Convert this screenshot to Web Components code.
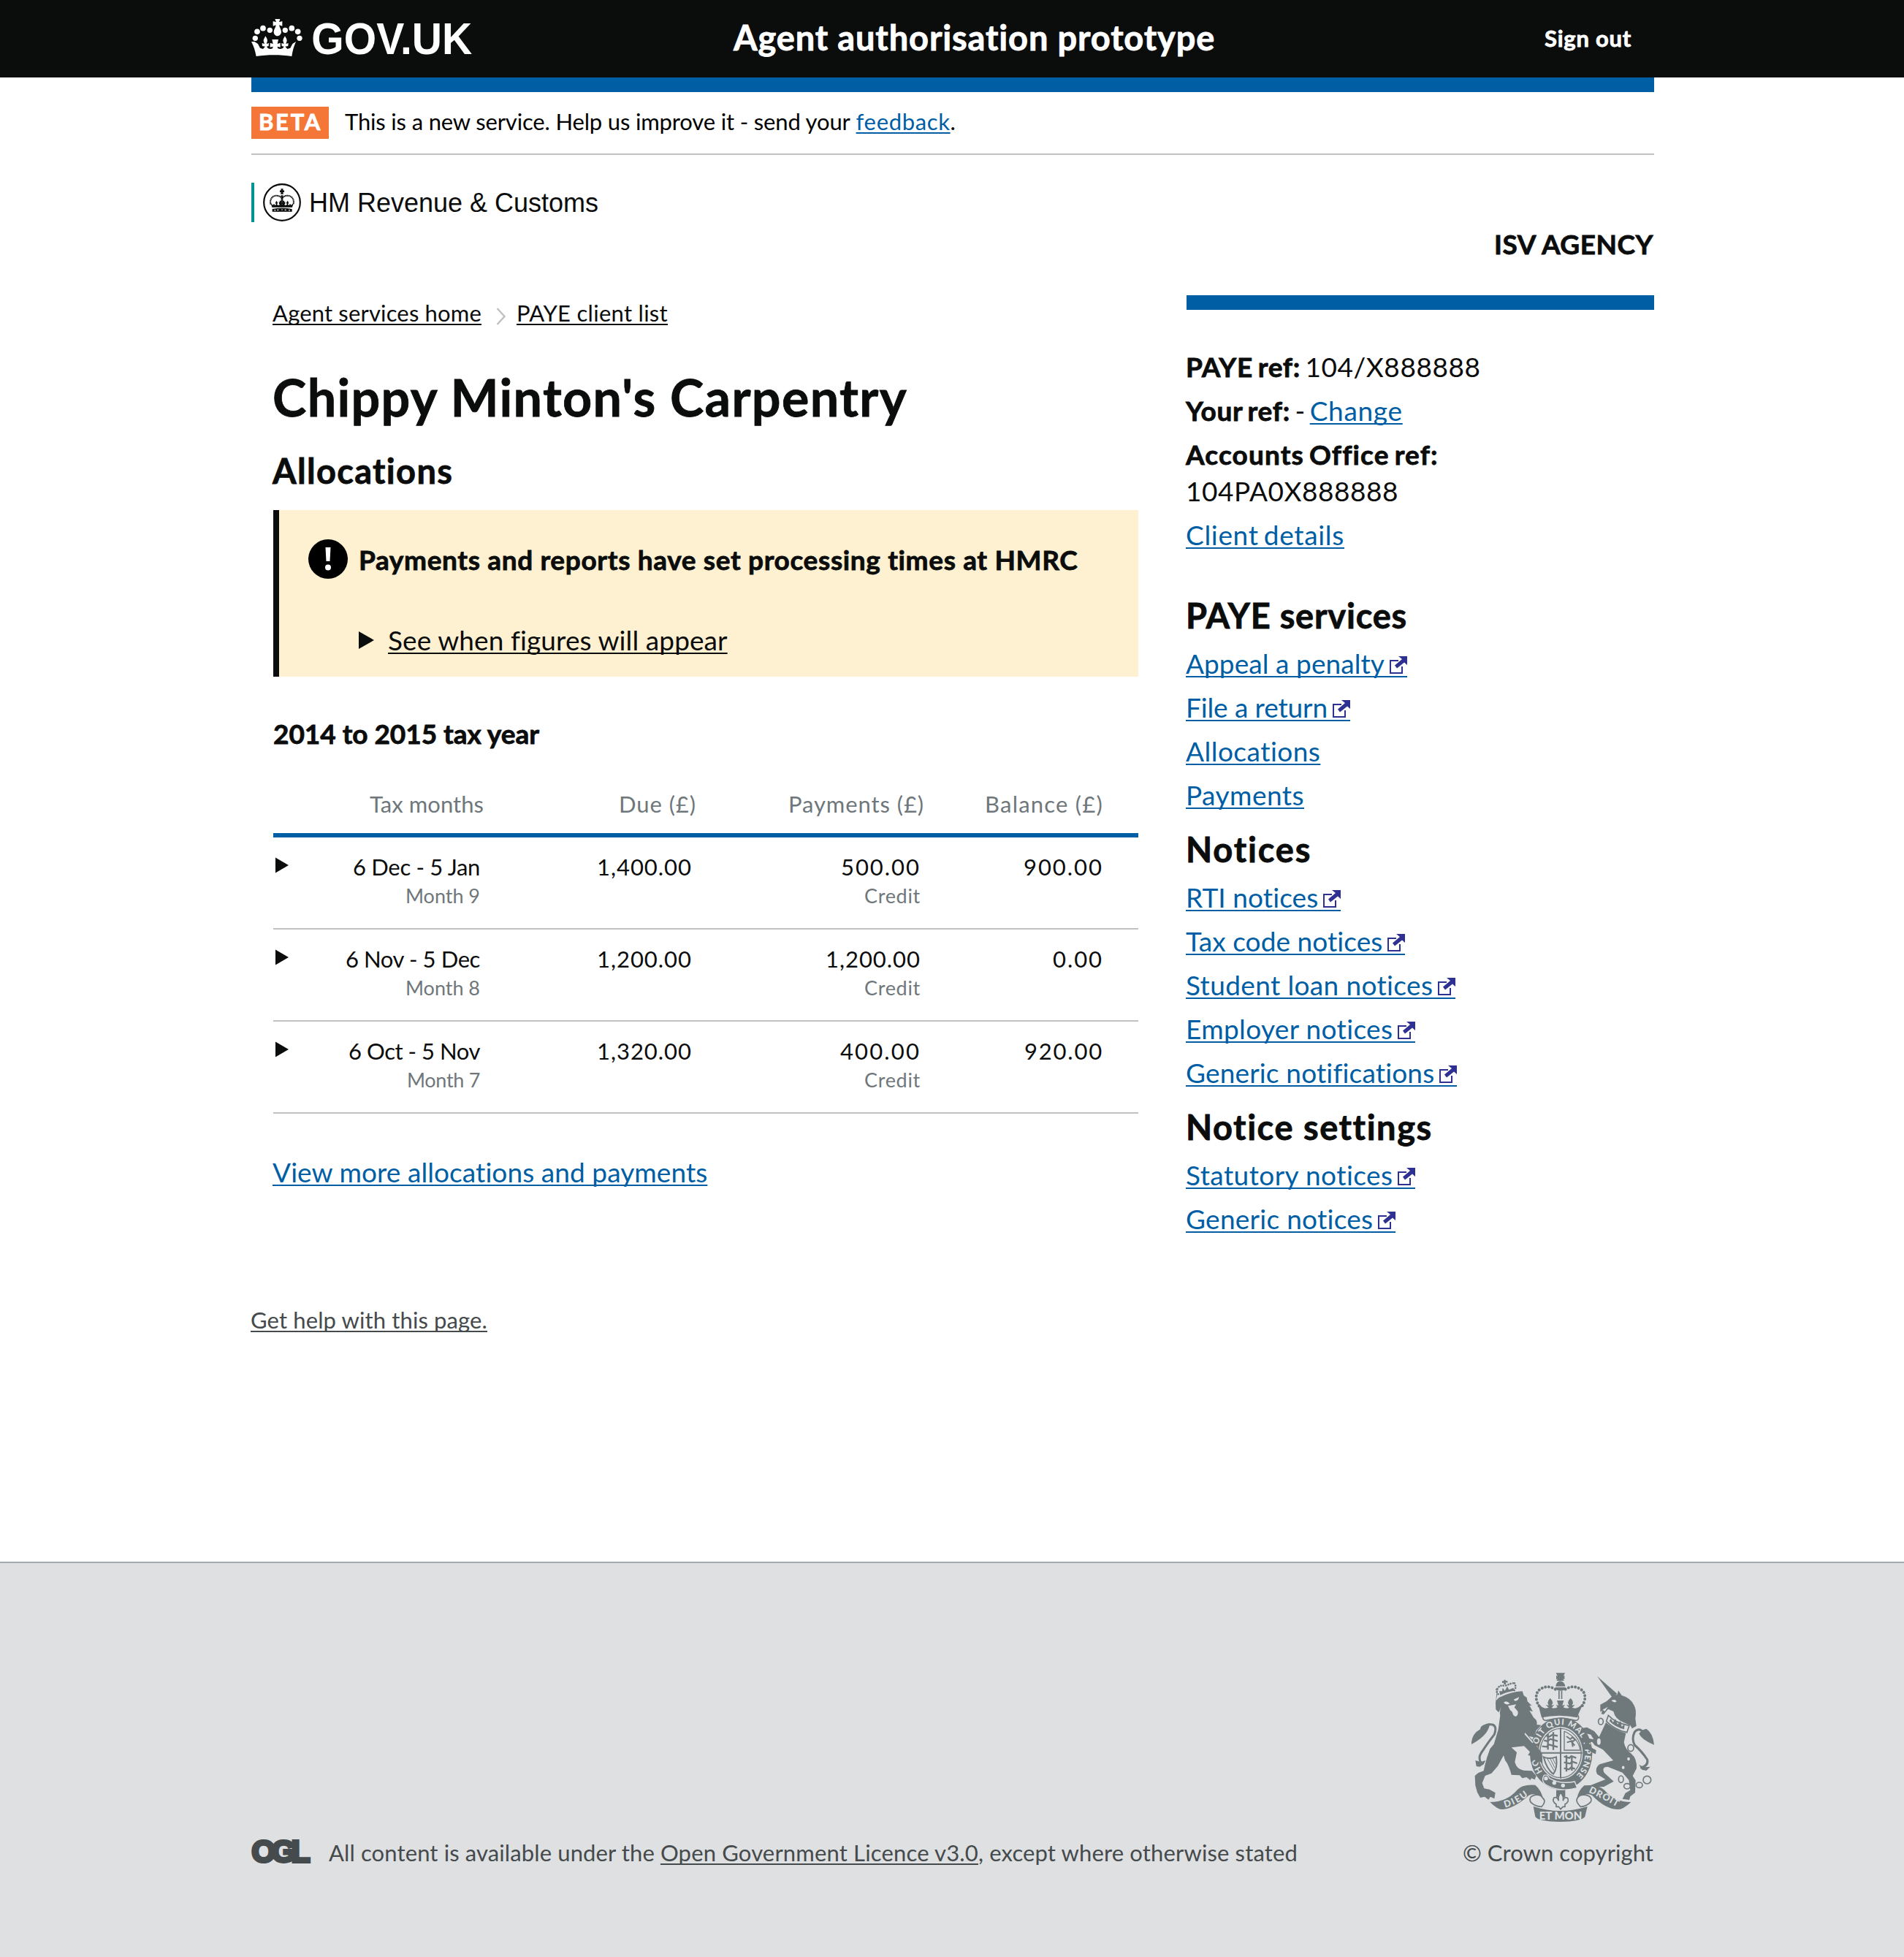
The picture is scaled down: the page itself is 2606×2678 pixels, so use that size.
<!DOCTYPE html>
<html lang="en">
<head>
<meta charset="utf-8">
<title>Chippy Minton's Carpentry - Allocations</title>
<style>
html,body{margin:0;padding:0;background:#fff}
body{font-family:Lato,"Liberation Sans",sans-serif;font-size:37px;line-height:50px;color:#0b0c0c}
</style>
</head>
<body>
<agent-page></agent-page>
<script>
const define = (name, html, after) => customElements.define(name, class extends HTMLElement {
  connectedCallback() {
    if (this.shadowRoot) return;
    const t = document.createElement('template');
    t.innerHTML = html;
    this.attachShadow({mode: 'open'}).appendChild(t.content.cloneNode(true));
    if (after) after.call(this, this.shadowRoot);
  }
});

/* Inline run of text, tracked so that it fills the width given in "w". */
define('fit-text', `<style>
:host{display:inline;white-space:nowrap}
:host([link]){color:#005ea5;text-decoration:underline;text-decoration-thickness:2px;text-underline-offset:3px;text-decoration-skip-ink:none}
:host([dark]){color:inherit}
:host([b]){font-weight:700;-webkit-text-stroke:.8px currentColor}
</style><slot></slot>`, function () {
  const w = parseFloat(this.getAttribute('w'));
  if (!w) return;
  const n = this.textContent.length;
  const range = document.createRange();
  range.selectNodeContents(this);
  const natural = range.getBoundingClientRect().width;
  if (natural) this.style.letterSpacing = ((w - natural) / n).toFixed(3) + 'px';
});

define('crown-logo', `<style>:host{display:flex;align-items:flex-start;height:106px;color:#fff}
svg{display:block}</style>
<svg width="320" height="80" viewBox="0 0 960 240" style="margin:16px 0 0 -2px" fill="#fff">
<g><circle cx="25" cy="109" r="11"/><circle cx="33" cy="82" r="11.500"/><circle cx="57" cy="68" r="11.500"/><circle cx="85" cy="76" r="11"/>
<circle cx="148" cy="76" r="11"/><circle cx="175" cy="68" r="11.500"/><circle cx="200" cy="82" r="11.500"/><circle cx="207" cy="109" r="11"/>
<path d="M106 30h21l-4 13 13-4v20l-13-4c2 10 9 18 9 28 0 9-7 16-16 17-9-1-15-8-15-17 0-10 8-18 9-28l-12 4V39l13 4z"/>
<path d="M22 123l14 9 9 17 12 4 9-10-12-2-1-12 10 3-4-12c0-9 5-12 8-20 4 8 8 11 8 20l-4 12 10-3-1 12-8 2c5 10 15 12 24 8l2-8-12 3v-18l12 4-4-18h26l-4 18 12-4v18l-12-3 2 8c10 4 20 2 25-8l-9-2-1-12 10 3-4-12c0-9 4-12 8-20 4 8 8 11 8 20l-4 12 10-3-1 12-12 2 9 10 12-4 9-17 14-9c-8 19-14 38-17 60-48-7-98-7-146 0-4-22-10-41-20-60z"/></g>
<text x="256" y="174" font-family="Liberation Sans" font-weight="700" font-size="181" textLength="660" lengthAdjust="spacingAndGlyphs">GOV.UK</text>
</svg>`);

define('gov-header', `<style>
:host{display:block;background:#0b0c0c;color:#fff;height:106px}
.in{width:1920px;margin:0 auto;display:grid;grid-template-columns:661px 1fr auto;align-items:start}
.t{font:700 47px/60px Lato;padding-top:21px}
.s{font:700 31px/40px Lato;padding:32px 30px 0 0}
</style><div class="in"><crown-logo></crown-logo>
<div class="t"><fit-text b w="660">Agent authorisation prototype</fit-text></div>
<div class="s"><fit-text b w="119">Sign out</fit-text></div></div>`);

define('blue-bar', `<style>:host{display:block;height:20px;background:#005ea5;margin:0 -1px 0 1px}</style>`);

define('phase-banner', `<style>
:host{display:flex;align-items:center;height:84px;border-bottom:2px solid #bfc1c3;margin:0 -1px 0 1px;font-size:31px;line-height:40px;gap:22px}
.tag{background:#f47738;color:#fff;width:106px;height:44px;box-sizing:border-box;padding-left:10px;line-height:40px}
.msg{padding-bottom:4px;color:#000}
</style><div class="tag"><fit-text b w="87">BETA</fit-text></div>
<div class="msg"><fit-text w="691">This is a new service. Help us improve it - send your</fit-text> <fit-text link w="129">feedback</fit-text>.</div>`);

define('hmrc-logo', `<style>
:host{display:flex;align-items:center;height:54px;margin:38px 0 0 1px;border-left:4px solid #009390;font:36px/54px "Liberation Sans"}
svg{display:block;margin:0 11px 0 12px}
fit-text{padding-top:2px}
</style><svg width="52" height="52" viewBox="60 36 156 156"><circle cx="138" cy="114" r="74.500" fill="#fff" stroke="#0b0c0c" stroke-width="6.500"/>
<g fill="#0b0c0c"><circle cx="138" cy="68" r="6"/><path d="M133 58h10l-2 8 6-2v9l-6-2 3 9h-12l3-9-6 2v-9l6 2z"/>
<path d="M134 84h8v42h-8z"/><path d="M97 134l-5-16 9 7 4-6 4 7 5-4-3-5c0-5 3-6 4-10 2 4 5 5 5 10l-3 5 6 4 6-3-3-3-1-10 5 4-2-7h20l-2 7 5-4v10l-4 3 6 3 6-4-3-5c0-5 3-6 5-10 2 4 4 5 4 10l-3 5 5 4 4-7 4 6 10-7-5 16z"/><path d="M98 141q40-7 81 0v11H98z"/></g>
<g fill="#fff"><circle cx="109" cy="146" r="2.500"/><rect x="118" y="143" width="6" height="4"/><circle cx="138" cy="144" r="2.500"/><rect x="149" y="143" width="6" height="4"/><circle cx="168" cy="146" r="2.500"/></g>
<path d="M138 84v40" stroke="#fff" stroke-width="2" stroke-dasharray="2 4"/>
<path d="M92 122c-6-17 4-35 22-36 10 0 18 4 24 10 6-6 14-10 24-10 18 1 28 19 22 36" fill="none" stroke="#0b0c0c" stroke-width="6" stroke-dasharray="5 1.500"/></svg>
<fit-text w="396">HM Revenue &amp; Customs</fit-text>`);

define('bread-crumbs', `<style>:host{display:flex;align-items:center;margin-top:4px;font-size:31px;line-height:40px;height:40px}
svg{display:block;margin:9px 14px 0 20px}</style>
<fit-text link dark w="286">Agent services home</fit-text>
<svg width="14" height="24" viewBox="0 0 14 24" fill="none" stroke="#bfc1c3" stroke-width="2.500"><path d="M1.500 1l10 11-10 11"/></svg>
<fit-text link dark w="207">PAYE client list</fit-text>`);

define('warning-box', `<style>
:host{display:block;box-sizing:border-box;margin:24px 0 0 1px;height:228px;width:1184px;border-left:8px solid #0b0c0c;background:#fef1d2;padding:40px 0 0 40px}
.r{display:flex;align-items:center;gap:15px;height:54px}
.r fit-text{padding-top:2px}
.s{display:flex;align-items:center;margin:59px 0 0 69px;height:50px;gap:19px}
svg{display:block}
</style><div class="r"><svg width="54" height="54"><circle cx="27" cy="27" r="27"/><path d="M23.500 11h7l-1 19h-5z" fill="#fff"/><circle cx="27" cy="38.500" r="4" fill="#fff"/></svg><fit-text b w="985">Payments and reports have set processing times at HMRC</fit-text></div>
<div class="s"><svg width="21" height="26"><path d="M0 1v24l21-12z" fill="#0b0c0c"/></svg><fit-text link dark w="464">See when figures will appear</fit-text></div>`);

define('alloc-row', `<style>
:host{display:grid;grid-template-columns:34px 250px 290px 313px 250px 47px;height:104px;padding-top:20px;border-bottom:2px solid #bfc1c3;margin-left:1px;font-size:31px;line-height:40px;text-align:right;width:1184px}
svg{display:block;margin:7px 0 0 3px}
</style><svg width="18" height="22"><path d="M0 .5v21l18-10.500z" fill="#0b0c0c"/></svg><slot></slot>`);
define('alloc-cell', `<style>:host{display:block;padding-right:1px}
small{display:block;font-size:27px;line-height:40px;color:#6f777b}</style><slot></slot><small><slot name="sub"></slot></small>`);

define('alloc-table', `<style>
:host{display:block;margin-top:51px}
.h{display:grid;grid-template-columns:288px 291px 312px 245px 48px;border-bottom:6px solid #005ea5;margin-left:1px;width:1184px;height:60px;font-size:31px;line-height:40px;color:#6f777b;text-align:right}
</style><div class="h"><div><fit-text w="156">Tax months</fit-text></div><div><fit-text w="106">Due (£)</fit-text></div><div><fit-text w="186">Payments (£)</fit-text></div><div><fit-text w="162">Balance (£)</fit-text></div></div>
${[['6 Dec - 5 Jan',174,'Month 9',102,'1,400.00',130,'500.00',109,'900.00',109],
['6 Nov - 5 Dec',184,'Month 8',102,'1,200.00',130,'1,200.00',130,'0.00',69],
['6 Oct - 5 Nov',180,'Month 7',100,'1,320.00',130,'400.00',110,'920.00',108]].map(r =>
`<alloc-row><alloc-cell><fit-text w="${r[1]}">${r[0]}</fit-text><fit-text slot="sub" w="${r[3]}">${r[2]}</fit-text></alloc-cell>
<alloc-cell><fit-text w="${r[5]}">${r[4]}</fit-text></alloc-cell>
<alloc-cell><fit-text w="${r[7]}">${r[6]}</fit-text><fit-text slot="sub" w="77">Credit</fit-text></alloc-cell>
<alloc-cell><fit-text w="${r[9]}">${r[8]}</fit-text></alloc-cell></alloc-row>`).join('')}`);

define('side-link', `<style>
:host{display:flex;height:50px;margin-bottom:10px;align-items:flex-start}
.x{display:none;height:44px;box-sizing:border-box;border-bottom:2px solid #005ea5;padding:15px 0 0 7px}
:host([ext]) .x{display:block}
svg{display:block}
</style><slot></slot><span class="x"><svg width="24" height="24" viewBox="0 0 24 24" fill="none" stroke="#2e3191"><path d="M12 6H1v17h16V14" stroke-width="2"/><path d="M12 0h12v12l-4-3.500-10 8-3-4L17 4z" fill="#2e3191" stroke="none"/></svg></span>`);

define('side-bar', `<style>
:host{display:block}
p{margin:0 0 10px;height:50px;word-spacing:-3px}
p.two{height:100px}
h2{margin:0 0 11px;height:60px;font:700 47px/60px Lato}
</style><blue-bar></blue-bar>
<p style="margin-top:53px"><fit-text b w="157">PAYE ref:</fit-text> <fit-text w="240">104/X888888</fit-text></p>
<p><fit-text b w="143">Your ref:</fit-text> - <fit-text link w="127">Change</fit-text></p>
<p class="two"><fit-text b w="344">Accounts Office ref:</fit-text><br><fit-text w="291">104PA0X888888</fit-text></p>
<p><fit-text link w="217">Client details</fit-text></p>
<h2 style="margin-top:55px"><fit-text b w="303">PAYE services</fit-text></h2>
<side-link ext><fit-text link w="272">Appeal a penalty</fit-text></side-link>
<side-link ext><fit-text link w="194">File a return</fit-text></side-link>
<side-link><fit-text link w="185">Allocations</fit-text></side-link>
<side-link><fit-text link w="162">Payments</fit-text></side-link>
<h2 style="margin:19px 0 11px"><fit-text b w="173">Notices</fit-text></h2>
<side-link ext><fit-text link w="182">RTI notices</fit-text></side-link>
<side-link ext><fit-text link w="270">Tax code notices</fit-text></side-link>
<side-link ext><fit-text link w="339">Student loan notices</fit-text></side-link>
<side-link ext><fit-text link w="284">Employer notices</fit-text></side-link>
<side-link ext><fit-text link w="341">Generic notifications</fit-text></side-link>
<h2 style="margin:19px 0 11px"><fit-text b w="337">Notice settings</fit-text></h2>
<side-link ext><fit-text link w="284">Statutory notices</fit-text></side-link>
<side-link ext><fit-text link w="257">Generic notices</fit-text></side-link>`);

define('main-column', `<style>
:host{display:block;padding-left:30px}
h1,h2,h3,p{margin:0}
h1{font:700 70px/80px Lato;margin-top:55px}
h2{font:700 47px/60px Lato;margin-top:31px}
h3{font:700 37px/50px Lato;margin:52px 0 0 1px;padding-top:1px}
p{margin-top:55px}
</style><bread-crumbs></bread-crumbs>
<h1><fit-text b w="869">Chippy Minton's Carpentry</fit-text></h1>
<h2><fit-text b w="248">Allocations</fit-text></h2>
<warning-box></warning-box>
<h3><fit-text b w="364">2014 to 2015 tax year</fit-text></h3>
<alloc-table></alloc-table>
<p><fit-text link w="596">View more allocations and payments</fit-text></p>`);

define('royal-arms', `<style>:host{display:block}svg{display:block}</style>
<svg width="260" height="220" viewBox="0 0 780 660" fill="#6f787b" stroke="none" font-family="Lato" font-weight="900">
<g><path d="M359 25h37l-7 14 5-4v17l-6-4 4 9h-31l5-9-6 4V35l6 4z"/><path d="M358 80q2-19 18-22 18 3 21 22z"/><path d="M357 84h41v8q-20 12-41 0z"/><path d="M369 98h5v34h-5zM380 98h5v34h-5z"/>
<path d="M356 92q-28-18-56-4-27 14-21 48 4 16 12 26" fill="none" stroke="#6f787b" stroke-width="12" stroke-linecap="round" stroke-dasharray="0.1 14"/>
<path d="M398 92q28-18 56-4 29 14 23 48-4 16-12 26" fill="none" stroke="#6f787b" stroke-width="12" stroke-linecap="round" stroke-dasharray="0.1 14"/>
<path d="M285 150l18 16 12 4 14-2-12-12 12 2-4-10q2-12 10-20 9 8 11 20l-5 10 11-2-11 12q14 4 24-2l-6-10 10 2-6-20h28l-6 20 11-2-7 10q12 6 24 2l-11-12 11 2-5-10q2-12 11-20 9 8 10 20l-4 10 12-2-12 12 14 2 12-4 20-16-18 40-7 18q-72-16-146 0l-5-18z"/>
<path d="M305 208q0-14 20-15 52-8 108 0 19 1 19 15 0 12-12 12-63-16-122 0-13 0-13-12z" fill="none" stroke="#6f787b" stroke-width="5"/>
</g>
<ellipse cx="380" cy="356" rx="128" ry="148"/>
<ellipse cx="378" cy="354" rx="91" ry="108" fill="#dee0e2"/>
<ellipse cx="378" cy="354" rx="85" ry="101" fill="none" stroke="#6f787b" stroke-width="4"/>
<path d="M378 250v208M289 353h178" stroke="#6f787b" stroke-width="6"/>
<g fill="none" stroke="#6f787b" stroke-width="7"><path d="M318 282l12 5 14-8 22 4M310 302l14 3 12-9 30 9M302 326l18 2 10-9 36 10M326 275v65M348 268v73M392 368l22 6 8-8 20 8M392 392l24 5 10-8 20 7M392 416l20 5 9-8 16 6M402 362v68M424 364v62"/><path d="M393 264v78h66q-8-50-66-78" stroke-width="4"/><path d="M402 285l16 12 8-8 12 10-14 10 12 14M404 310l20-6 4 24" stroke-width="6"/><path d="M308 370q14 52 40 70 18-24 12-70-30 10-52 0z" stroke-width="6"/><path d="M322 374l30 54M334 374l20 40M345 374l11 24" stroke-width="3"/></g>
<path id="g1" d="M304 430A99 117 0 1 1 426 458" fill="none"/>
<text font-size="34" fill="#dee0e2"><textPath href="#g1" textLength="520">HO&#160;&#160;&#160;SOIT QUI MAL Y PENSE</textPath></text>
<path d="M310 445q-14 22 6 38 60 34 130 14l-10-26q-60 12-104-14-6-18-22-12z" stroke="#dee0e2" stroke-width="4"/>
<g fill="#dee0e2"><circle cx="318" cy="458" r="8"/><circle cx="352" cy="476" r="8"/><circle cx="388" cy="487" r="8"/></g>
<path d="M118 90q10-18 32-12 22-10 38-12M122 112q-12-14-4-24M188 96q10-14 0-30" fill="none" stroke="#6f787b" stroke-width="8" stroke-linecap="round" stroke-dasharray="0.1 10"/><path d="M126 100l12 0 2-14 9 12 10-18 7 14 18-8 4 12q-34 4-58 18zM138 58l8 0-1-5 8 0-1 5 8-1v8l-8-1 2 8h-9l0-7-7 1z"/>
<path d="M113 138l12-12q48-24 96-26l6 18 12 8 3 16 18 18-10-2 14 26-14-5 18 30q16 10 12 28l18 2-20 22-10 28-20-4q26 26 36 48l18 20 2 44-14-10-10 10-10-18-14 6 4-20-16-2 8-14-24-24-52 6 22 20-8 40q8 30 36 34l34 2 18 20-6 16-14-6-4 8-16-12-18 4-10-12-34-2q-10-40-26-60l-6-20-24 44-26 30-26 10-12 30 8 22 22 4 24 14-4 24-16-8-8 12-16-12-18 4-12-22-8-28-2-40 14-12 22-8q10-50 26-90l16-20 18-60 8-58q-4-14 4-34l-10 22-12-12-1-26 4-40 8-22z"/>
<g fill="#dee0e2"><path d="M144 147q10-12 26 4-14 8-26-4zM185 134l22-10q-2 16-16 16zM162 160l34-6-8 12 14 16q4 14-8 22-12-2-14-18l-10-10z"/><path d="M232 270l34 40-4 3-32-36z"/></g>
<path d="M52 395q-14-20 0-42 26-40 54-76 12-34-8-40-22-4-30 8" fill="none" stroke="#6f787b" stroke-width="9"/><path d="M12 308q4-34 36-52 0-20 40-24-6 50-76 86zM28 384l22 6 20-6-8 16-16 10-14-2z"/>
<path d="M528 38l82 72-18 18z"/><path d="M541 155l26-14 20-18 24-10 4-16 14 20q36 10 50 40 12 20 6 56l4 30-18 10-6-12-30-14q-34-14-40-44l-22-10-18 22-10-2 4-14-8 6z"/><path d="M574 199q30 32 86 42l-10 28q-50-10-84-46z" fill="#dee0e2" stroke="#6f787b" stroke-width="5"/><path d="M578 222l6-10 9 16 10-14 9 22 12-14 5 24 12-12-2 22q-36-8-61-34z"/>
<path d="M586 138q16-8 22 4-8 8-22-4zM550 176l22-12-12 18z" fill="#dee0e2"/>
<path d="M564 228q40 34 82 44l-8 38q6 30 30 46 24 20 22 60l-16 32 12 18-2 50-20 16-4 14-28-4 12-24 20-12-6-42-26-30-60-24q-28 0-14 26l38 34-40 22-42 2-26 26-14-8 12-20 76-30-34-22q-12-24 10-40l56-16-42-44-34-18-10-14-14 2 8 20 22 12-2 16-14-6-26-18-6-28 18-12 20 4-12-20-18-4-22-6 2-16 22-4 30 16 20 24z"/>
<path d="M706 415q34-10 28-34-22-34-52-60-14-26 0-54 18-20 36 2" fill="none" stroke="#6f787b" stroke-width="9"/><path d="M762 320q-4-48-32-66-20 4-30 20 10 26 62 46zM700 402l22 10 24-2-16 16-18-4z"/>
<g stroke="#6f787b" stroke-width="5" fill="#dee0e2"><ellipse cx="543" cy="224" rx="10" ry="13"/><ellipse cx="535" cy="307" rx="10" ry="16"/><ellipse cx="666" cy="333" rx="12" ry="14"/><ellipse cx="657" cy="378" rx="8" ry="9"/><ellipse cx="635" cy="413" rx="8" ry="9"/><ellipse cx="626" cy="461" rx="10" ry="14"/><ellipse cx="651" cy="490" rx="13" ry="11"/><ellipse cx="701" cy="485" rx="13" ry="11"/><circle cx="733" cy="464" r="16"/></g>
<path d="M88 555q70 0 112-50 20-24 74-20 24 20 32 56l-28-14q-10-8-30 0-60 54-110 58-20 0-50-30zM667 555q-68 0-108-48-26-26-84-20-24 20-30 54l28-14q14-8 34 0 56 58 108 58 20 0 52-30zM266 573q110 36 222 0l-10 42q-14 20-102 21-90-1-102-21z"/>
<path d="M306 540q-10-18-34-14-26 6-18 28 18 20 46 20 20-22 6-34zM446 540q10-18 36-14 28 6 20 28-18 20-42 20-22-22-14-34z" fill="#dee0e2" stroke="#6f787b" stroke-width="5"/>
<path id="r1" d="M150 578q54-14 108-60" fill="none"/><path id="r2" d="M492 514q60 28 124 64" fill="none"/>
<g fill="#dee0e2" font-size="38"><text><textPath href="#r1" textLength="108">DIEU</textPath></text><text><textPath href="#r2" textLength="132">DROIT</textPath></text><text x="290" y="626" font-size="44" textLength="176" lengthAdjust="spacingAndGlyphs">ET MON</text></g>
<path d="M360 506h37v30h-37z"/><path d="M378 516q14 16 10 34 4-18 18-12 10 14-10 26v10h-8l-10 10-8-10h-10v-10q-18-12-10-26 14-8 20 12-4-18 8-34z" fill="#dee0e2" stroke="#6f787b" stroke-width="5"/>
</svg>`);

define('page-footer', `<style>
:host{display:block;height:540px;border-top:2px solid #a1acb2;background:#dee0e2;margin-top:311px;color:#454a4c;font-size:31px;line-height:40px}
.in{width:1920px;height:376px;margin:0 auto;padding-top:40px;display:flex;justify-content:space-between;align-items:flex-end;box-sizing:content-box}
.l{display:flex;align-items:center}
.r{display:flex;flex-direction:column;align-items:flex-end}
.l svg{display:block;margin:-13px 10px -9px -9px;overflow:visible}
royal-arms{margin:0 -7px 14px 0}
</style><div class="in"><div class="l"><svg width="106" height="62" viewBox="-10 -14 106 62"><text x=".5" y="32" font-family="Liberation Sans" font-weight="700" font-size="42" fill="#454a4c" stroke="#454a4c" stroke-width="4" textLength="80" lengthAdjust="spacing">OGL</text></svg>
<span><fit-text w="446">All content is available under the</fit-text> <fit-text link dark w="435">Open Government Licence v3.0</fit-text><fit-text w="437">, except where otherwise stated</fit-text></span></div>
<div class="r"><royal-arms></royal-arms><fit-text w="261">© Crown copyright</fit-text></div></div>`);

define('agent-page', `<style>
:host{display:block;min-height:2678px}
.w{width:1920px;margin:0 auto}
.a{height:50px;margin:5px 0 45px;text-align:right}
.g{display:grid;grid-template-columns:1280px 640px}
.help{margin-top:83px;font-size:31px;line-height:40px;color:#454a4c}
</style><gov-header></gov-header><div class="w"><blue-bar></blue-bar><phase-banner></phase-banner><hmrc-logo></hmrc-logo>
<div class="a"><fit-text b w="218">ISV AGENCY</fit-text></div>
<div class="g"><main-column></main-column><side-bar></side-bar></div>
<div class="help"><fit-text link dark w="324">Get help with this page.</fit-text></div></div>
<page-footer></page-footer>`);
</script>
</body>
</html>
